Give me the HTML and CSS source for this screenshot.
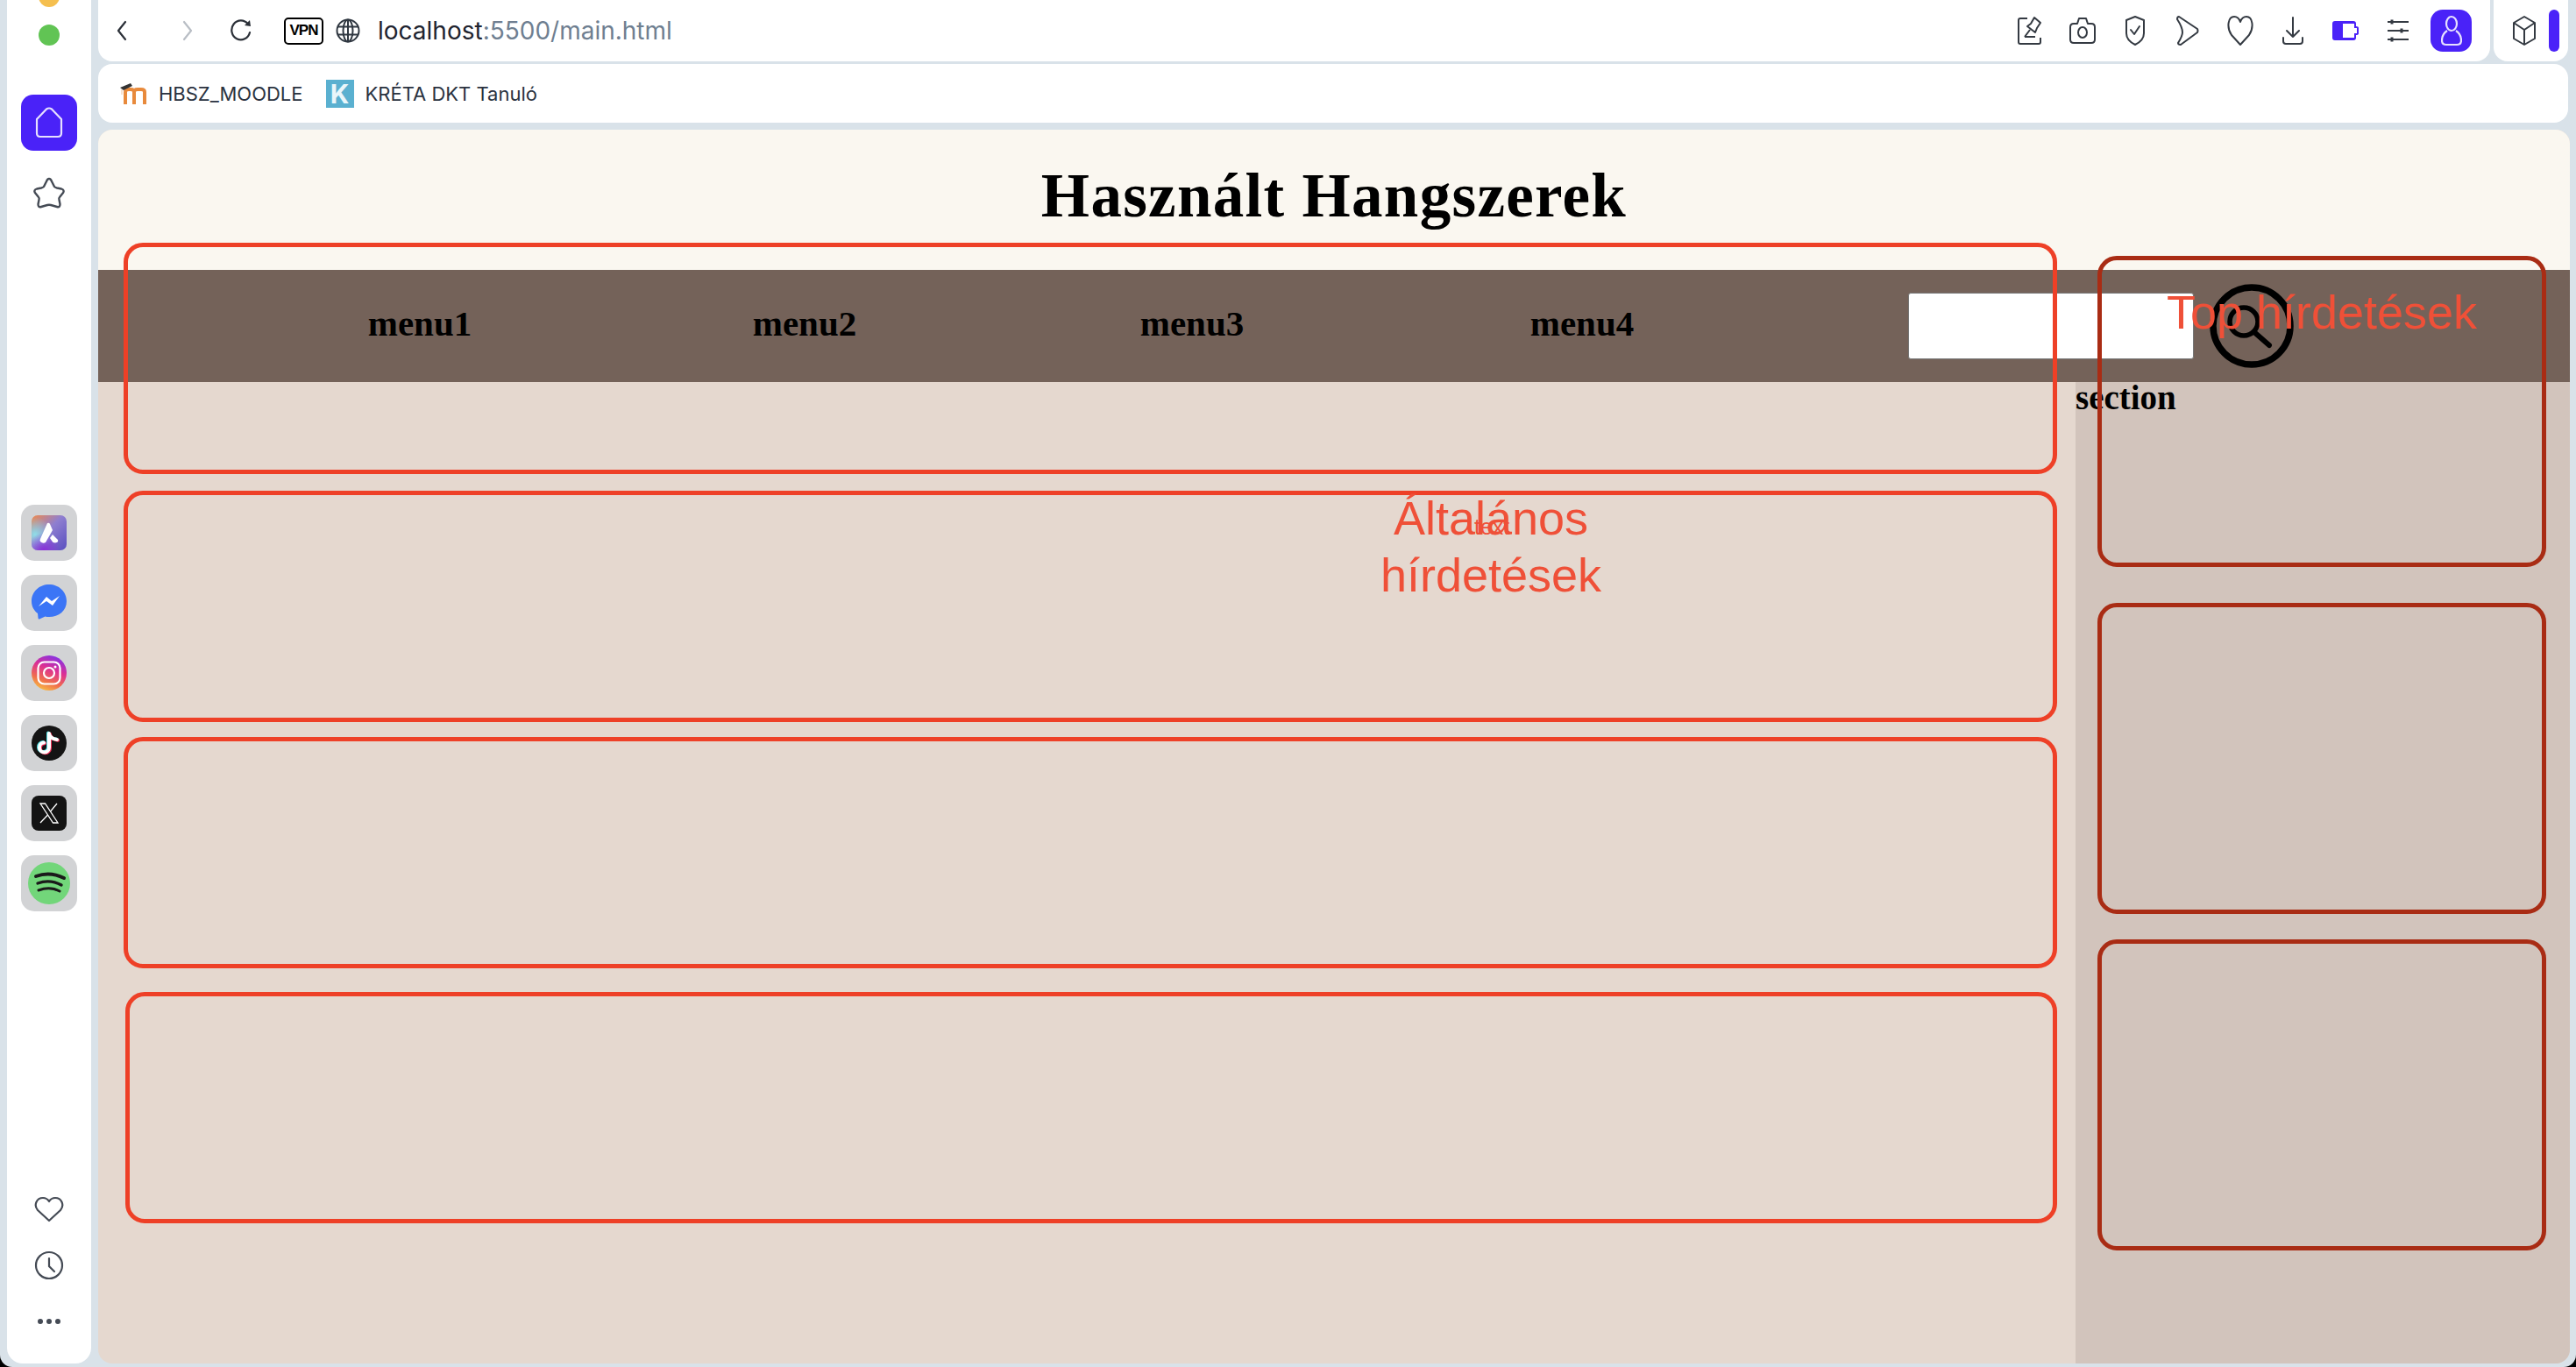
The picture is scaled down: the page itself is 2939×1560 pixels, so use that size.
FILE: index.html
```html
<!DOCTYPE html>
<html lang="hu">
<head>
    <title>Használt Hangszerek</title>
    <meta name="viewport" content="width=device-width, initial-scale=1">
    <link rel="stylesheet" href="styles.css">
</head>
<body>
<div class="window">
    <!-- browser side panel -->
    <aside class="sidebar">
        <span class="light yellow"></span>
        <span class="light green"></span>
        <div class="home-btn">
            <svg width="32" height="36" viewBox="0 0 32 36" fill="none" stroke="#e6e0ff" stroke-width="2.2" stroke-linejoin="round"><path d="M2 14 L13 2.500 Q16 0.500 19 2.500 L30 14 V30 Q30 34 26 34 H6 Q2 34 2 30 Z"/></svg>
        </div>
        <svg class="star" width="38" height="36" viewBox="0 0 38 36" fill="none" stroke="#454b55" stroke-width="2.400" stroke-linejoin="round"><path d="M19 2 Q21 2 22 5 L25 11 Q26 12 28 12.500 L33 13.500 Q37 15 35 18 L31 23 Q30 24 30.500 26 L31.500 31 Q31.500 35 28 34 L21 32 Q19 31.500 17 32 L10 34 Q6.500 35 6.500 31 L7.500 26 Q8 24 7 23 L3 18 Q1 15 5 13.500 L10 12.500 Q12 12 13 11 L16 5 Q17 2 19 2 Z"/></svg>

        <div class="apps">
            <div class="tile">
                <svg width="40" height="40" viewBox="0 0 40 40">
                    <defs>
                        <linearGradient id="arcA" x1="0" y1="0" x2="1" y2="1">
                            <stop offset="0" stop-color="#f08a4b"/>
                            <stop offset="0.45" stop-color="#8f7fd0"/>
                            <stop offset="1" stop-color="#5a4fc0"/>
                        </linearGradient>
                        <radialGradient id="arcB" cx="0.1" cy="0.55" r="0.5">
                            <stop offset="0" stop-color="#8fdde8"/>
                            <stop offset="1" stop-color="#8fdde8" stop-opacity="0"/>
                        </radialGradient>
                        <radialGradient id="arcC" cx="0.35" cy="1" r="0.5">
                            <stop offset="0" stop-color="#8a2fd8"/>
                            <stop offset="1" stop-color="#8a2fd8" stop-opacity="0"/>
                        </radialGradient>
                    </defs>
                    <rect width="40" height="40" rx="7" fill="url(#arcA)"/>
                    <rect width="40" height="40" rx="7" fill="url(#arcB)"/>
                    <rect width="40" height="40" rx="7" fill="url(#arcC)"/>
                    <path d="M18 9 Q20 8 21 10 L24 17 L16 31 Q13 33 10 30 Q9 29 10 27 Z" fill="#fff"/>
                    <path d="M24 22 L30 28 Q31 31 27 31.500 Q24 31.500 23 29 L21 26 Z" fill="#fff"/>
                </svg>
            </div>
            <div class="tile">
                <svg width="40" height="42" viewBox="0 0 40 42">
                    <path d="M20 0 C31 0 40 8 40 19 C40 30 31 37 20 37 Q17.500 37 15.500 36.400 L9 39.500 Q7.500 40 7.500 38 L7 33 C2.500 29.500 0 25 0 19 C0 8 9 0 20 0 Z" fill="#3b75f6"/>
                    <path d="M8 25 L17 14 L23 19 L32 13 L24 24 L17 19 Z" fill="#fff"/>
                </svg>
            </div>
            <div class="tile">
                <svg width="40" height="40" viewBox="0 0 40 40">
                    <defs>
                        <linearGradient id="insta" x1="0.2" y1="1" x2="0.6" y2="0">
                            <stop offset="0" stop-color="#f9c845"/>
                            <stop offset="0.3" stop-color="#f0704a"/>
                            <stop offset="0.65" stop-color="#dc2f94"/>
                            <stop offset="1" stop-color="#8a32e0"/>
                        </linearGradient>
                    </defs>
                    <circle cx="20" cy="20" r="20" fill="url(#insta)"/>
                    <rect x="7.500" y="7.500" width="25" height="25" rx="7" fill="none" stroke="#fff" stroke-width="2.200"/>
                    <circle cx="20" cy="20" r="6" fill="none" stroke="#fff" stroke-width="2.200"/>
                    <circle cx="27" cy="13" r="1.500" fill="#fff"/>
                </svg>
            </div>
            <div class="tile">
                <svg width="40" height="40" viewBox="0 0 40 40" fill="none" stroke-width="4" stroke-linecap="round">
                    <circle cx="20" cy="20" r="20" fill="#141414" stroke="none"/>
                    <path d="M20 9 V25 A5.500 5.500 0 1 1 14 19.500 M20 10 Q22 15 29 16" stroke="#4fe3e6" transform="translate(-1 -0.500)"/>
                    <path d="M20 9 V25 A5.500 5.500 0 1 1 14 19.500 M20 10 Q22 15 29 16" stroke="#f5335a" transform="translate(1 0.800)"/>
                    <path d="M20 9 V25 A5.500 5.500 0 1 1 14 19.500 M20 10 Q22 15 29 16" stroke="#fff"/>
                </svg>
            </div>
            <div class="tile">
                <svg width="40" height="40" viewBox="0 0 40 40">
                    <rect width="40" height="40" rx="8" fill="#141414"/>
                    <path d="M10 9 H15.500 L30 31 H24.500 Z" fill="none" stroke="#fff" stroke-width="1.300"/>
                    <path d="M29 9 L21.500 18 M18.500 22 L10 31" stroke="#fff" stroke-width="1.300"/>
                </svg>
            </div>
            <div class="tile">
                <svg width="48" height="48" viewBox="0 0 48 48" fill="none" stroke="#1a1a1a" stroke-linecap="round">
                    <circle cx="24" cy="24" r="24" fill="#72d67a" stroke="none"/>
                    <path d="M9 16 Q25 10 41 18" stroke-width="4"/>
                    <path d="M11 24 Q25 19 38 26" stroke-width="3.400"/>
                    <path d="M12 32 Q25 27 36 33" stroke-width="3"/>
                </svg>
            </div>
        </div>

        <div class="side-bottom">
            <svg width="34" height="30" viewBox="0 0 34 30" fill="none" stroke="#454b55" stroke-width="2.200" stroke-linejoin="round"><path d="M17 28 L4 16 C-1 10 3 2 10 2 Q14.500 2 17 6 Q19.500 2 24 2 C31 2 35 10 30 16 Z"/></svg>
            <svg width="34" height="34" viewBox="0 0 34 34" fill="none" stroke="#454b55" stroke-width="2.200" stroke-linecap="round"><circle cx="17" cy="17" r="15"/><path d="M17 9 V18 L23 24"/></svg>
            <svg class="dots" width="28" height="8" viewBox="0 0 28 8" fill="#454b55"><circle cx="4" cy="4" r="3"/><circle cx="14" cy="4" r="3"/><circle cx="24" cy="4" r="3"/></svg>
        </div>
    </aside>

    <div class="browser">
        <div class="top-row">
            <div class="toolbar">
                <svg class="back" width="24" height="28" viewBox="0 0 24 28" fill="none" stroke="#2b3038" stroke-width="2.200" stroke-linecap="round" stroke-linejoin="round"><path d="M16 4 L8 14 L16 24"/></svg>
                <svg class="forward" width="24" height="28" viewBox="0 0 24 28" fill="none" stroke="#b9bec5" stroke-width="2.200" stroke-linecap="round" stroke-linejoin="round"><path d="M8 4 L16 14 L8 24"/></svg>
                <svg class="reload" width="24" height="28" viewBox="0 0 24 28" fill="none" stroke="#2b3038" stroke-width="2.200" stroke-linecap="round"><path d="M20 6.500 A10.500 11 0 1 0 22 16"/><path d="M16 8 L23 9 L22 2" fill="#2b3038" stroke="none"/></svg>
                <span class="vpn">VPN</span>
                <svg class="globe" width="28" height="28" viewBox="0 0 28 28" fill="none" stroke="#2f3740" stroke-width="2"><circle cx="14" cy="14" r="12.500"/><ellipse cx="14" cy="14" rx="5.500" ry="12.500"/><path d="M2 9.500 H26 M2 18.500 H26 M14 1.500 V26.500"/></svg>
                <span class="url">localhost<span class="url-rest">:5500/main.html</span></span>

                <div class="tool-icons">
                    <span class="tool"><svg width="28" height="34" viewBox="0 0 28 34" fill="none" stroke="#343a42" stroke-width="2" stroke-linejoin="round"><path d="M11 3 H3 Q1 3 1 5 V30 Q1 32 3 32 H24 Q26 32 26 30 V25"/><path d="M19 2 L26 8 L22 14 L20 19 L11 12 L15 9 Z"/><path d="M14 16 L8 24"/><path d="M8 24 H20"/></svg></span>
                    <span class="tool"><svg width="30" height="32" viewBox="0 0 30 32" fill="none" stroke="#343a42" stroke-width="2" stroke-linejoin="round"><path d="M5 8 H9 L11 2 H19 L21 8 H25 Q29 8 29 12 V26 Q29 30 25 30 H5 Q1 30 1 26 V12 Q1 8 5 8 Z"/><ellipse cx="15" cy="18" rx="5" ry="6"/></svg></span>
                    <span class="tool"><svg width="24" height="36" viewBox="0 0 24 36" fill="none" stroke="#343a42" stroke-width="2" stroke-linejoin="round" stroke-linecap="round"><path d="M12 2 L22 6 V21 Q22 29 12 34 Q2 29 2 21 V6 Z"/><path d="M7 17 L11 22 L17 13"/></svg></span>
                    <span class="tool"><svg width="26" height="36" viewBox="0 0 26 36" fill="none" stroke="#343a42" stroke-width="2" stroke-linejoin="round"><path d="M3 2 L24 16 Q25 18 24 20 L5 34 Q2 34 2 32 Q7 24 7 20 Q7 14 1 5 Q1 2 3 2 Z"/></svg></span>
                    <span class="tool"><svg width="30" height="36" viewBox="0 0 30 36" fill="none" stroke="#343a42" stroke-width="2" stroke-linejoin="round"><path d="M15 34 L5 23 C-1 14 1 2 8 2 Q13 2 15 8 Q17 2 22 2 C29 2 31 14 25 23 Z"/></svg></span>
                    <span class="tool"><svg width="26" height="34" viewBox="0 0 26 34" fill="none" stroke="#343a42" stroke-width="2" stroke-linecap="round" stroke-linejoin="round"><path d="M13 2 V24 M6 17 L13 24 L20 17"/><path d="M2 25 V29 Q2 32 5 32 H21 Q24 32 24 29 V25"/></svg></span>
                    <span class="tool"><svg width="30" height="22" viewBox="0 0 30 22"><path d="M3 0 H24 Q27 0 27 3 V6 Q30 6 30 8 V14 Q30 16 27 16 V19 Q27 22 24 22 H3 Q0 22 0 19 V3 Q0 0 3 0 Z" fill="#4a22f8"/><path d="M12 3 H25 V8 H28 V14 H25 V19 H12 Z" fill="#fff"/></svg></span>
                    <span class="tool"><svg width="26" height="26" viewBox="0 0 26 26" fill="none" stroke="#343a42" stroke-width="2.200"><path d="M1 3 H25 M1 13 H25 M1 23 H25"/><path d="M6 0.500 V5.500 M17 10.500 V15.500 M6 20.500 V25.500" stroke-width="3"/></svg></span>
                </div>
                <div class="user-btn">
                    <svg width="24" height="36" viewBox="0 0 24 36" fill="none" stroke="#e6e0ff" stroke-width="2.200" stroke-linejoin="round"><ellipse cx="12" cy="10" rx="6" ry="8"/><path d="M7 18 Q1 22 1 29 Q1 34 6 34 H18 Q23 34 23 29 Q23 22 17 18"/></svg>
                </div>
            </div>
            <div class="ext-panel">
                <svg width="26" height="36" viewBox="0 0 26 36" fill="none" stroke="#343a42" stroke-width="2" stroke-linejoin="round"><path d="M13 2 L25 9 V27 L13 34 L1 27 V9 Z"/><path d="M1 9 L13 17 L25 9 M13 17 V34"/></svg>
                <span class="ext-bar"></span>
            </div>
        </div>

        <div class="bookmarks">
            <svg class="moodle" width="32" height="24" viewBox="0 0 32 24" fill="none">
                <path d="M7 24 V10 Q7 7 11 7 H13 Q17 7 17 10 V24 M17 10 Q17 7 21 7 H25 Q29 7 29 10 V24" stroke="#e88a3c" stroke-width="4"/>
                <path d="M1 5 L13 0 L15 3 L5 8 Z" fill="#333"/>
                <path d="M3 7 V13" stroke="#f3d9c2" stroke-width="1.500"/>
            </svg>
            <span class="bm-text">HBSZ_MOODLE</span>
            <span class="kreta">K</span>
            <span class="bm-text">KRÉTA DKT Tanuló</span>
        </div>

        <!-- the page itself -->
        <div class="page">
            <header class="page-head">
                <h1>Használt Hangszerek</h1>
            </header>
            <nav class="menu">
                <ul>
                    <li>menu1</li>
                    <li>menu2</li>
                    <li>menu3</li>
                    <li>menu4</li>
                </ul>
                <input class="search" type="text">
                <svg class="search-icon" width="96" height="98" viewBox="0 0 96 98" fill="none" stroke="#000" stroke-linecap="round">
                    <circle cx="48" cy="49" r="44" stroke-width="7.500"/>
                    <circle cx="39" cy="44" r="16" stroke-width="5.500"/>
                    <path d="M52 57 L68 71" stroke-width="6"/>
                </svg>
            </nav>
            <div class="page-body">
                <main class="content"></main>
                <section class="side">section</section>
            </div>

            <!-- wireframe marks drawn over the page -->
            <div class="marks">
                <div class="marks-left">
                    <div class="box box-one"></div>
                    <div class="box box-two">
                        <p class="label label-general">Általános hírdetések</p>
                        <span class="tiny">text</span>
                    </div>
                    <div class="box box-three"></div>
                    <div class="box box-four"></div>
                </div>
                <div class="marks-right">
                    <div class="box-top">
                        <p class="label">Top hírdetések</p>
                    </div>
                    <div class="box-top box-top-two"></div>
                    <div class="box-top box-top-three"></div>
                </div>
            </div>
        </div>
    </div>
</div>
</body>
</html>
```

FILE: styles.css
```css
html, body {
    margin: 0;
    padding: 0;
    background: #000;
}
body {
    width: 2939px;
    height: 1560px;
    overflow: hidden;
    font-family: Inter, "Liberation Sans", sans-serif;
}
.window {
    display: flex;
    width: 2939px;
    height: 1560px;
    box-sizing: border-box;
    padding: 0 7px 4px 8px;
    gap: 8px;
    background: #d9e2e9;
    border-radius: 0 0 14px 14px;
    overflow: hidden;
}

/* side panel */
.sidebar {
    display: flex;
    flex-direction: column;
    align-items: center;
    flex: none;
    width: 96px;
    height: 1556px;
    background: #fff;
    border-radius: 0 0 18px 18px;
    overflow: hidden;
}
.light {
    display: block;
    flex: none;
    width: 24px;
    height: 24px;
    border-radius: 50%;
}
.yellow {
    margin-top: -16px;
    background: #f5bf4f;
}
.green {
    margin-top: 20px;
    background: #61c454;
}
.home-btn, .user-btn {
    display: flex;
    align-items: center;
    justify-content: center;
    flex: none;
    background: #4a22f8;
    border-radius: 14px;
}
.home-btn {
    width: 64px;
    height: 64px;
    margin-top: 56px;
}
.star {
    flex: none;
    margin-top: 30px;
}
.apps {
    display: flex;
    flex-direction: column;
    gap: 16px;
    margin-top: 338px;
}
.tile {
    display: flex;
    align-items: center;
    justify-content: center;
    width: 64px;
    height: 64px;
    background: #d2d3d5;
    border-radius: 15px;
}
.side-bottom {
    display: flex;
    flex-direction: column;
    align-items: center;
    gap: 32px;
    margin-top: auto;
    padding-bottom: 44px;
}
.dots {
    margin-top: 11px;
}

/* browser chrome */
.browser {
    display: flex;
    flex-direction: column;
    flex: 1;
    min-width: 0;
}
.top-row {
    display: flex;
    gap: 4px;
    height: 70px;
    flex: none;
    margin-right: 2px;
}
.toolbar {
    display: flex;
    align-items: center;
    flex: 1;
    padding: 0 21px 0 15px;
    background: #fff;
    border-radius: 0 0 16px 16px;
}
.forward {
    margin-left: 51px;
}
.reload {
    margin-left: 37px;
}
.vpn {
    display: flex;
    align-items: center;
    justify-content: center;
    width: 45px;
    height: 31px;
    box-sizing: border-box;
    margin-left: 37px;
    border: 2px solid #000;
    border-radius: 5px;
    font-family: "Liberation Sans", sans-serif;
    font-size: 17px;
    font-weight: 700;
    letter-spacing: -1px;
    color: #000;
}
.globe {
    margin-left: 14px;
}
.url {
    margin-left: 20px;
    font-size: 28px;
    color: #1f2430;
}
.url-rest {
    color: #6f7f91;
}
.tool-icons {
    display: flex;
    margin-left: auto;
}
.tool {
    display: flex;
    align-items: center;
    justify-content: center;
    width: 60px;
    height: 70px;
}
.user-btn {
    width: 47px;
    height: 48px;
    margin-left: 7px;
}
.ext-panel {
    display: flex;
    align-items: center;
    flex: none;
    width: 85px;
    box-sizing: border-box;
    padding-left: 22px;
    background: #fff;
    border-radius: 0 0 16px 16px;
}
.ext-bar {
    width: 12px;
    height: 48px;
    margin-left: 15px;
    background: #4a22f8;
    border-radius: 6px;
}
.bookmarks {
    display: flex;
    align-items: center;
    flex: none;
    height: 67px;
    margin: 3px 2px 0 0;
    padding-left: 24px;
    background: #fff;
    border-radius: 16px;
}
.bm-text {
    margin-left: 13px;
    font-size: 22px;
    color: #2a3240;
}
.kreta {
    display: flex;
    align-items: center;
    justify-content: center;
    width: 32px;
    height: 32px;
    margin-left: 26px;
    background: #5ab0d0;
    font-size: 30px;
    font-weight: 700;
    color: #eaf6fa;
}

/* page */
.page {
    position: relative;
    display: flex;
    flex-direction: column;
    flex: 1;
    min-height: 0;
    margin-top: 8px;
    background: #e5d8cf;
    border-radius: 16px;
    overflow: hidden;
    font-family: "Liberation Serif", serif;
    color: #000;
}
.page-head {
    flex: none;
    height: 160px;
    box-sizing: border-box;
    padding-top: 35px;
    background: #faf7f0;
    text-align: center;
}
.page-head h1 {
    margin: 0;
    font-size: 71px;
    line-height: 80px;
    font-weight: 700;
    letter-spacing: 1.3px;
}
.menu {
    display: flex;
    align-items: center;
    flex: none;
    height: 128px;
    box-sizing: border-box;
    padding-left: 147px;
    background: #746259;
}
.menu ul {
    display: grid;
    grid-template-columns: 440px 438px 446px 444px;
    margin: 0 0 7px;
    padding: 0;
    list-style: none;
    text-align: center;
    font-size: 41px;
    font-weight: 700;
}
.search {
    width: 326px;
    height: 76px;
    box-sizing: border-box;
    margin: 0 0 0 150px;
    background: #fff;
    border: 1px solid #767676;
    border-radius: 3px;
}
.search-icon {
    margin-left: 18px;
}
.page-body {
    display: flex;
    flex: 1;
    min-height: 0;
}
.content {
    flex: 1;
}
.side {
    flex: none;
    width: 564px;
    background: #d2c4bc;
    font-size: 39px;
    font-weight: 700;
    line-height: 35px;
}

/* red wireframe marks */
.marks {
    position: absolute;
    inset: 0;
    display: flex;
    font-family: "Liberation Sans", sans-serif;
}
.marks-left {
    display: flex;
    flex-direction: column;
    width: 2206px;
    margin-left: 29px;
    padding-top: 129px;
}
.marks-right {
    display: flex;
    flex-direction: column;
    width: 512px;
    margin-left: 46px;
    padding-top: 144px;
}
.box, .box-top {
    position: relative;
    box-sizing: border-box;
    border: 5px solid #ee4027;
    border-radius: 22px;
}
.box {
    height: 264px;
}
.box-two {
    margin-top: 19px;
}
.box-three {
    margin-top: 17px;
}
.box-four {
    margin-top: 27px;
    margin-left: 2px;
}
.box-top {
    height: 355px;
    border-color: #a92c14;
    text-align: center;
}
.box-top-two {
    margin-top: 41px;
}
.box-top-three {
    margin-top: 29px;
}
.label {
    margin: 27px 0 0;
    font-size: 54px;
    line-height: 65px;
    color: #ef5038;
}
.label-general {
    width: 300px;
    margin: -6px 0 0 1405px;
    text-align: center;
}
.tiny {
    position: absolute;
    left: 1536px;
    top: 22px;
    font-size: 25px;
    color: #ef5038;
}
```
